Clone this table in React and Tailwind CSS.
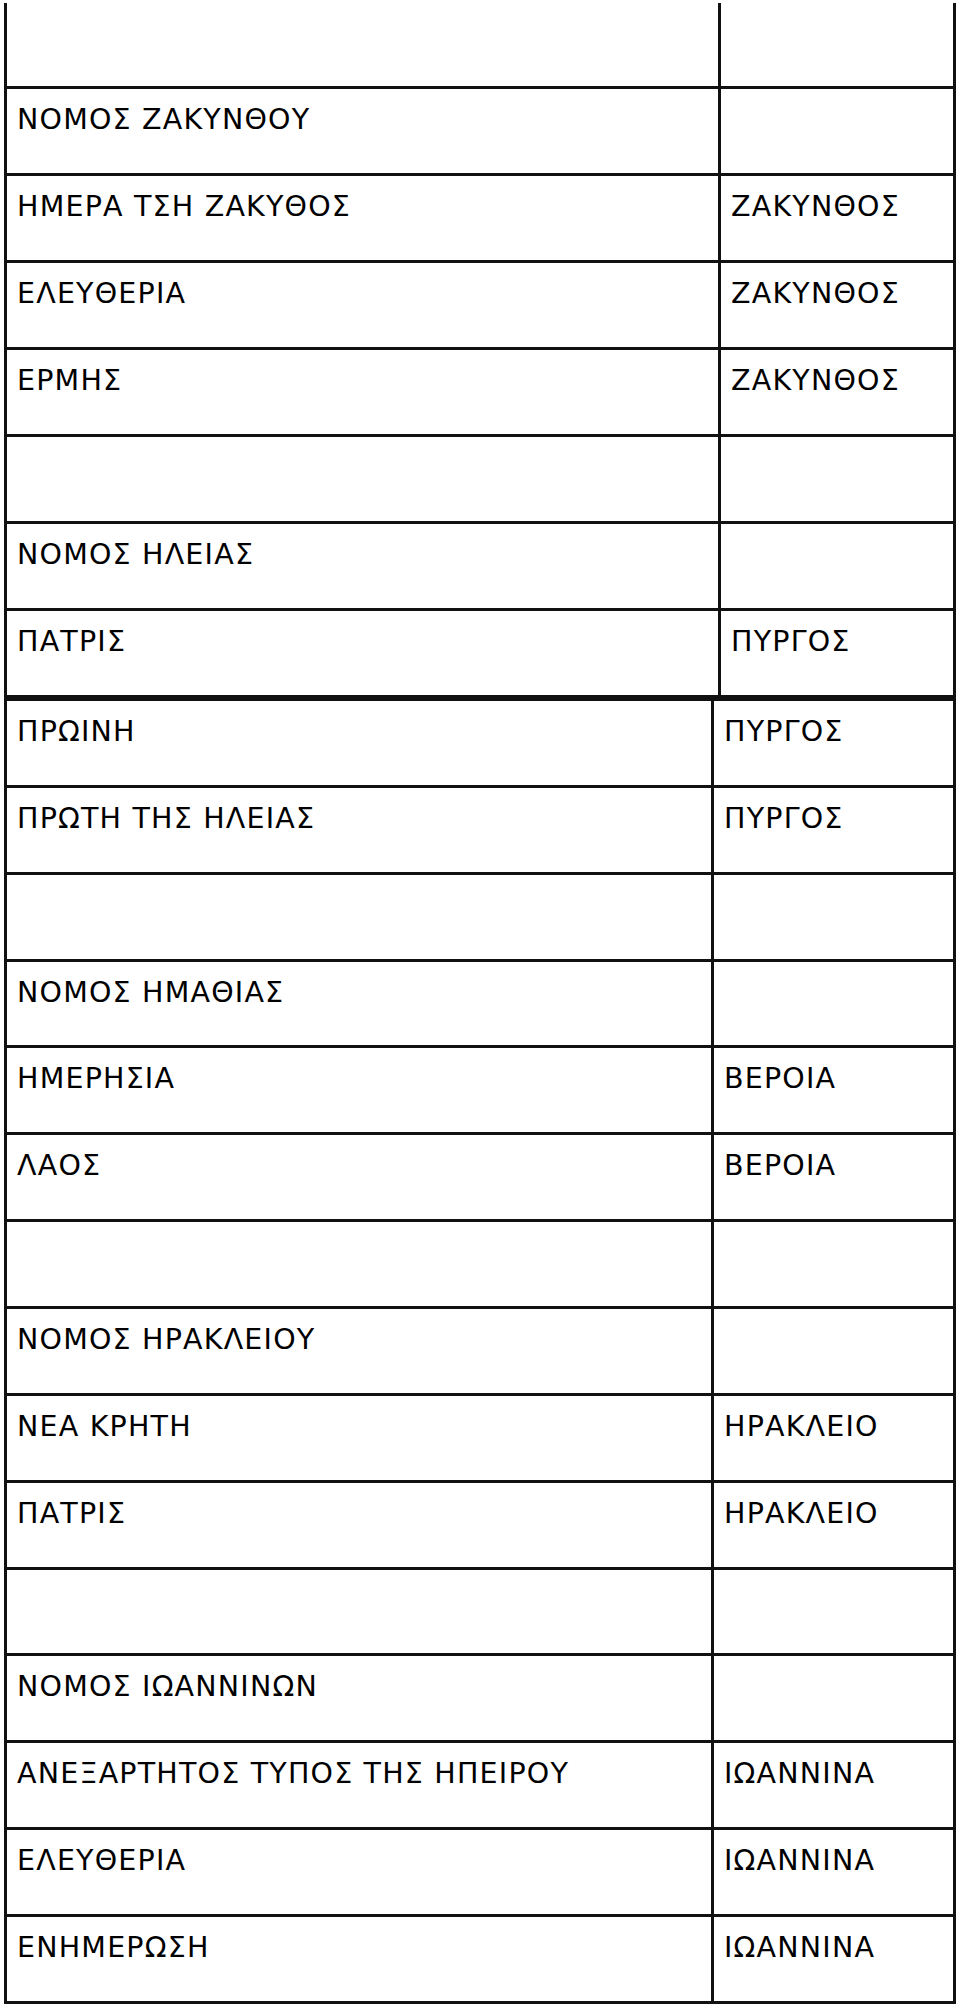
import React from "react";

const first = [
  ["", ""],
  ["ΝΟΜΟΣ ΖΑΚΥΝΘΟΥ", ""],
  ["ΗΜΕΡΑ ΤΣΗ ΖΑΚΥΘΟΣ", "ΖΑΚΥΝΘΟΣ"],
  ["ΕΛΕΥΘΕΡΙΑ", "ΖΑΚΥΝΘΟΣ"],
  ["ΕΡΜΗΣ", "ΖΑΚΥΝΘΟΣ"],
  ["", ""],
  ["ΝΟΜΟΣ ΗΛΕΙΑΣ", ""],
  ["ΠΑΤΡΙΣ", "ΠΥΡΓΟΣ"],
];

const second = [
  ["ΠΡΩΙΝΗ", "ΠΥΡΓΟΣ"],
  ["ΠΡΩΤΗ ΤΗΣ ΗΛΕΙΑΣ", "ΠΥΡΓΟΣ"],
  ["", ""],
  ["ΝΟΜΟΣ ΗΜΑΘΙΑΣ", ""],
  ["ΗΜΕΡΗΣΙΑ", "ΒΕΡΟΙΑ"],
  ["ΛΑΟΣ", "ΒΕΡΟΙΑ"],
  ["", ""],
  ["ΝΟΜΟΣ ΗΡΑΚΛΕΙΟΥ", ""],
  ["ΝΕΑ ΚΡΗΤΗ", "ΗΡΑΚΛΕΙΟ"],
  ["ΠΑΤΡΙΣ", "ΗΡΑΚΛΕΙΟ"],
  ["", ""],
  ["ΝΟΜΟΣ ΙΩΑΝΝΙΝΩΝ", ""],
  ["ΑΝΕΞΑΡΤΗΤΟΣ ΤΥΠΟΣ ΤΗΣ ΗΠΕΙΡΟΥ", "ΙΩΑΝΝΙΝΑ"],
  ["ΕΛΕΥΘΕΡΙΑ", "ΙΩΑΝΝΙΝΑ"],
  ["ΕΝΗΜΕΡΩΣΗ", "ΙΩΑΝΝΙΝΑ"],
];

const Row = ({ cells, leftW, h }) => (
  <div className={`flex border-b-[3px] border-[#111] ${h}`}>
    <div className={`${leftW} shrink-0 border-r-[3px] border-[#111] px-[10px] pt-[15px] whitespace-nowrap`}>
      {cells[0]}
    </div>
    <div className="flex-1 px-[10px] pt-[15px] whitespace-nowrap">{cells[1]}</div>
  </div>
);

export default function App() {
  return (
    <div
      className="w-[960px] h-[2006px] bg-white text-black text-[28.5px] leading-[32px] tracking-[1.2px] pt-[3px]"
      style={{ fontFamily: '"DejaVu Sans", Verdana, sans-serif' }}
    >
      <div className="ml-[4px] w-[952px] border-x-[3px] border-[#111]">
        {first.map((r, i) => (
          <Row
            key={i}
            cells={r}
            leftW="w-[714px]"
            h={i === 0 ? "h-[86px]" : "h-[87px]"}
          />
        ))}
      </div>
      <div className="ml-[4px] w-[952px] border-x-[3px] border-t-[3px] border-[#111]">
        {second.map((r, i) => (
          <Row key={i} cells={r} leftW="w-[707px]" h="h-[86.87px]" />
        ))}
      </div>
    </div>
  );
}
